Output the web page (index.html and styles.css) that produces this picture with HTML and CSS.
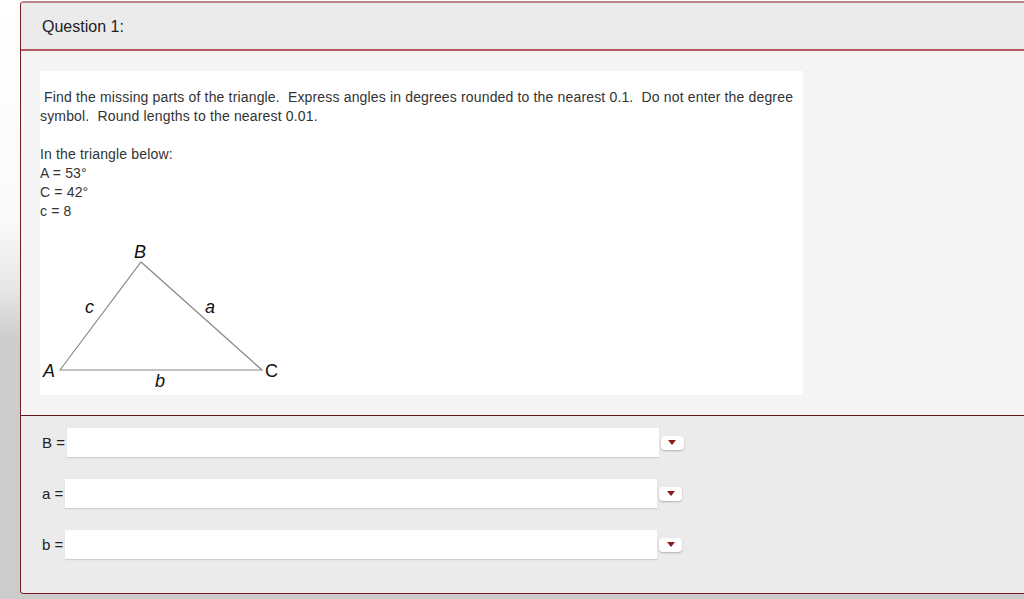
FILE: index.html
```html
<!DOCTYPE html>
<html lang="en">

<head>
  <meta charset="UTF-8">
  <title>Question 1</title>
  <link rel="stylesheet" href="styles.css">
</head>

<body>
  <div class="question">
    <!-- header -->
    <div class="q-header">Question 1:</div>

    <!-- question text and figure -->
    <div class="q-body">
      <div class="q-content">
        <p class="intro">&nbsp;Find the missing parts of the triangle.&nbsp; Express angles in degrees rounded to the nearest 0.1.&nbsp; Do not enter the degree symbol.&nbsp; Round lengths to the nearest 0.01.</p>
        <p class="givens">In the triangle below:<br>A = 53°<br>C = 42°<br>c = 8</p>
        <svg class="figure" width="250" height="156" viewBox="0 0 250 156">
          <polygon points="20,132 101,24 222,132" fill="none" stroke="#8a8a8a" stroke-width="1.2" />
          <text x="94" y="20" class="lbl it">B</text>
          <text x="3" y="139" class="lbl it">A</text>
          <text x="225" y="139" class="lbl">C</text>
          <text x="45" y="75" class="lbl it">c</text>
          <text x="165" y="75" class="lbl it">a</text>
          <text x="115" y="149" class="lbl it">b</text>
        </svg>
      </div>
    </div>

    <!-- answer fields -->
    <div class="q-answers">
      <div class="answer-row">
        <label>B =</label>
        <input type="text" class="answer-input">
        <button class="drop-btn"><span class="caret"></span></button>
      </div>
      <div class="answer-row">
        <label>a =</label>
        <input type="text" class="answer-input">
        <button class="drop-btn"><span class="caret"></span></button>
      </div>
      <div class="answer-row">
        <label>b =</label>
        <input type="text" class="answer-input">
        <button class="drop-btn"><span class="caret"></span></button>
      </div>
    </div>
  </div>
</body>

</html>
```

FILE: styles.css
```css
body {
  margin: 0;
  padding: 1px 0 0 20px;
  height: 599px;
  box-sizing: border-box;
  overflow: hidden;
  background: linear-gradient(to bottom, #ffffff 0, #fafafa 220px, #e6e6e6 290px, #cccccc 340px, #cccccc 100%);
  font-family: 'Liberation Sans', Arial, sans-serif;
  color: #333;
}

.question {
  width: 1030px;
  border: 1px solid #7a1a22;
  border-top: 2px solid #b8848b;
  border-radius: 4px 0 0 4px;
  overflow: hidden;
}

.q-header {
  height: 46px;
  line-height: 48px;
  padding-left: 21px;
  background: #ebebeb;
  border-bottom: 2px solid #b65a62;
  font-size: 16px;
  color: #222;
}

.q-body {
  background: #f4f4f4;
  padding: 20px 0 20px 19px;
  border-bottom: 1px solid #6b1520;
}

.q-content {
  width: 763px;
  height: 324px;
  background: #fff;
  padding-top: 17px;
  box-sizing: border-box;
  font-size: 14px;
  line-height: 19px;
  letter-spacing: 0.16px;
}

.q-content p {
  margin: 0 0 19px;
}

.figure {
  display: block;
  margin-top: -2px;
}

.lbl {
  font-family: 'Liberation Sans', Arial, sans-serif;
  font-size: 18px;
  fill: #111;
}

.lbl.it {
  font-style: italic;
}

.q-answers {
  background: #ebebeb;
  padding: 12px 0 34px 21px;
  display: flex;
  flex-direction: column;
  gap: 22px;
}

.answer-row {
  display: flex;
  align-items: center;
  height: 29px;
}

.answer-row label {
  font-size: 15px;
  color: #222;
  padding-right: 2px;
}

.answer-input {
  width: 592px;
  height: 29px;
  border: none;
  background: #fff;
  box-shadow: 0 1px 1px #cfcfcf;
  padding: 0;
  box-sizing: border-box;
}

.drop-btn {
  width: 23px;
  height: 14px;
  margin-left: 2px;
  padding: 0;
  border: none;
  border-radius: 4px;
  background: #fff;
  box-shadow: 0 1px 2px rgba(0, 0, 0, 0.25);
  display: flex;
  align-items: center;
  justify-content: center;
}

.caret {
  width: 0;
  height: 0;
  border-left: 4px solid transparent;
  border-right: 4px solid transparent;
  border-top: 5px solid #8b1a1a;
}
```
